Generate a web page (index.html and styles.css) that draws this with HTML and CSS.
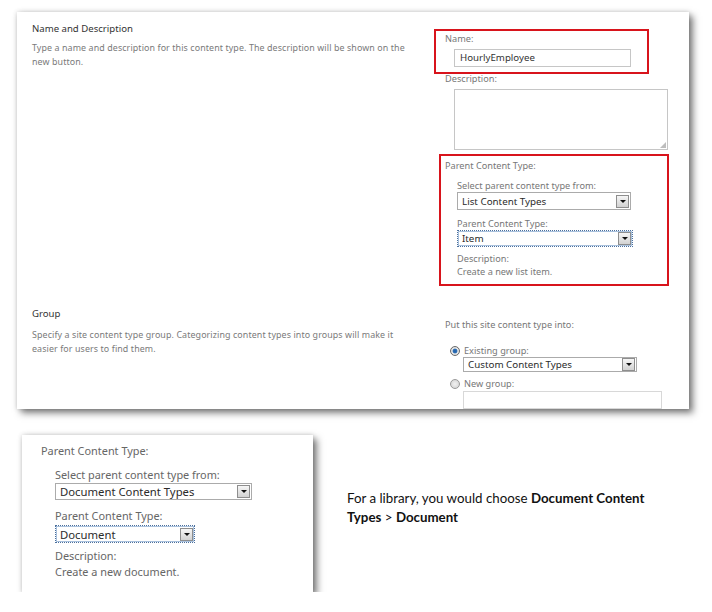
FILE: index.html
```html
<!DOCTYPE html>
<html>
<head>
<meta charset="utf-8">
<link rel="stylesheet" href="styles.css">
</head>
<body>
<div class="panel">
  <div class="section s1">
    <div class="sec-left">
      <div class="sec-title">Name and Description</div>
      <div class="sec-desc">Type a name and description for this content type. The description will be shown on the new button.</div>
    </div>
    <div class="sec-right">
      <div class="redbox box-name">
        <div class="lbl">Name:</div>
        <div class="input name-input">HourlyEmployee</div>
      </div>
      <div class="lbl desc-lbl">Description:</div>
      <div class="textarea"><span class="grip"></span></div>
      <div class="redbox box-parent">
        <div class="lbl plbl">Parent Content Type:</div>
        <div class="sub">
          <div class="lbl sl1">Select parent content type from:</div>
          <div class="select sel-a"><span class="val">List Content Types</span><span class="arrow"></span></div>
          <div class="lbl sl2">Parent Content Type:</div>
          <div class="select sel-b focus"><span class="val">Item</span><span class="arrow"></span></div>
          <div class="lbl sl3">Description:</div>
          <div class="lbl sl4">Create a new list item.</div>
        </div>
      </div>
    </div>
  </div>
  <div class="section s2">
    <div class="sec-left g-left">
      <div class="sec-title">Group</div>
      <div class="sec-desc">Specify a site content type group. Categorizing content types into groups will make it easier for users to find them.</div>
    </div>
    <div class="sec-right g-right">
      <div class="lbl put">Put this site content type into:</div>
      <div class="radio-row r1"><span class="radio on"></span><span class="lbl">Existing group:</span></div>
      <div class="select sel-c"><span class="val">Custom Content Types</span><span class="arrow"></span></div>
      <div class="radio-row r2"><span class="radio"></span><span class="lbl">New group:</span></div>
      <div class="input new-input"></div>
    </div>
  </div>
</div>

<div class="bottom">
  <div class="panel2">
    <div class="lbl2 p2title">Parent Content Type:</div>
    <div class="sub2">
      <div class="lbl2 b1">Select parent content type from:</div>
      <div class="select sel-d"><span class="val">Document Content Types</span><span class="arrow"></span></div>
      <div class="lbl2 b2">Parent Content Type:</div>
      <div class="select sel-e focus"><span class="val">Document</span><span class="arrow"></span></div>
      <div class="lbl2 b3">Description:</div>
      <div class="lbl2 b4">Create a new document.</div>
    </div>
  </div>
  <div class="note">
    <div class="note-line">For a library, you would choose <b>Document Content</b></div>
    <div class="note-line"><b>Types</b> &gt; <b>Document</b></div>
  </div>
</div>
</body>
</html>
```

FILE: styles.css
```css
html, body {
  margin: 0;
  padding: 0;
  background: #ffffff;
}
body {
  font-family: "Noto Sans", "Open Sans", sans-serif;
  color: #444;
}
.panel {
  margin: 12px 0 0 17px;
  width: 672px;
  height: 397px;
  background: #fff;
  box-shadow: 0 0 5px rgba(0,0,0,0.18), 4px 4px 7px rgba(0,0,0,0.5);
  overflow: hidden;
}
.section {
  display: flex;
}
.s1 { height: 288px; }
.s2 { height: 109px; }
.sec-left {
  width: 387px;
  padding: 10px 0 0 15px;
}
.g-left { padding-top: 7px; }
.sec-title {
  font-size: 9.6px;
  line-height: 14px;
  color: #333;
}
.sec-desc {
  margin-top: 5px;
  font-size: 8.9px;
  line-height: 14px;
  color: #7a7a7a;
  letter-spacing: 0.1px;
}
.g-left .sec-desc { margin-top: 7px; }
.sec-right {
  padding-left: 15px;
  display: flex;
  flex-direction: column;
  align-items: flex-start;
}
.g-right { padding-left: 26px; }
.lbl {
  font-size: 9.2px;
  line-height: 12px;
  color: #777;
}
.redbox {
  border: 2px solid #d8141c;
  box-sizing: border-box;
}
.box-name {
  margin-top: 17px;
  width: 215px;
  height: 45px;
  padding: 2px 0 0 9px;
}
.input {
  box-sizing: border-box;
  border: 1px solid #c6c6c6;
  background: #fff;
  font-size: 9.7px;
  color: #333;
  padding-left: 5px;
}
.name-input {
  margin: 4px 0 0 9px;
  width: 177px;
  height: 18px;
  line-height: 16px;
}
.desc-lbl {
  margin: 0 0 0 11px;
  height: 12px;
  position: relative;
  top: -1px;
}
.textarea {
  margin: 3px 0 0 20px;
  width: 214px;
  height: 61px;
  box-sizing: border-box;
  border: 1px solid #c6c6c6;
  position: relative;
}
.grip {
  position: absolute;
  right: 1px;
  bottom: 1px;
  width: 6px;
  height: 6px;
  background: radial-gradient(circle, #999 0.6px, transparent 0.9px) 0 0 / 2px 2px;
  clip-path: polygon(100% 0, 100% 100%, 0 100%);
}
.box-parent {
  margin: 4px 0 0 5px;
  width: 230px;
  height: 132px;
  padding: 3px 0 0 4px;
}
.plbl { line-height: 14px; }
.sub {
  padding-left: 12px;
}
.sl1 { margin-top: 7px; }
.sl2 { margin-top: 8px; }
.sl3 { margin-top: 6px; }
.sl4 { margin-top: 1px; }

.select {
  display: flex;
  align-items: center;
  box-sizing: border-box;
  border: 1px solid #ababab;
  background: #fff;
  height: 18px;
  padding: 0 1px 0 4px;
  font-size: 9.8px;
  color: #2b2b2b;
}
.select .val { flex: 1; white-space: nowrap; }
.select .arrow {
  width: 13px;
  height: 13px;
  box-sizing: border-box;
  border: 1px solid #8e8e8e;
  background: linear-gradient(#f6f6f6, #d2d2d2);
  position: relative;
}
.select .arrow::after {
  content: "";
  position: absolute;
  left: 2.5px;
  top: 4px;
  border-left: 3px solid transparent;
  border-right: 3px solid transparent;
  border-top: 3px solid #111;
}
.select.focus {
  border: 1px dotted #4b6f9c;
  outline: 1px solid #a9c1dd;
  outline-offset: -2px;
}
.sel-a { width: 174px; }
.sel-b { width: 176px; height: 17px; }

.put { margin-top: 19px; }
.radio-row {
  display: flex;
  align-items: center;
  height: 14px;
  margin: 14px 0 0 5px;
}
.r2 { margin-top: 6px; }
.radio {
  width: 10px;
  height: 10px;
  border-radius: 50%;
  box-sizing: border-box;
  border: 1px solid #9a9a9a;
  background: radial-gradient(circle, #f2f2f2 0, #cfcfcf 100%);
  margin-right: 4px;
}
.radio.on {
  background: radial-gradient(circle, #1e5fa8 0, #2f6fb5 2px, #e7e7e7 2.8px, #cfcfcf 100%);
  border-color: #6a6a6a;
}
.sel-c { width: 174px; height: 17px; margin-left: 18px; }
.new-input {
  margin: 1px 0 0 18px;
  width: 199px;
  height: 30px;
  border-color: #d8d8d8;
}

.bottom {
  display: flex;
  align-items: flex-start;
  margin: 26px 0 0 22px;
}
.panel2 {
  width: 291px;
  height: 157px;
  box-sizing: border-box;
  background: #fff;
  box-shadow: 0 0 5px rgba(0,0,0,0.18), 4px 4px 7px rgba(0,0,0,0.5);
  padding: 9px 0 0 19px;
}
.lbl2 {
  font-size: 10.9px;
  line-height: 14px;
  color: #666;
}
.sub2 { padding-left: 14px; }
.b1 { margin-top: 10px; }
.b2 { margin-top: 9px; }
.b3 { margin-top: 6px; }
.b4 { margin-top: 2px; }
.sel-d {
  width: 197px;
  height: 17px;
  margin-top: 1px;
  font-size: 11.3px;
}
.sel-e {
  width: 140px;
  height: 18px;
  margin-top: 2px;
  font-size: 11.3px;
}
.note {
  margin: 54px 0 0 34px;
  font-family: "Lato", "Open Sans", sans-serif;
  font-size: 13.3px;
  line-height: 19px;
  color: #111;
}
.note-line { white-space: nowrap; }
.note b { font-weight: 700; }
```
